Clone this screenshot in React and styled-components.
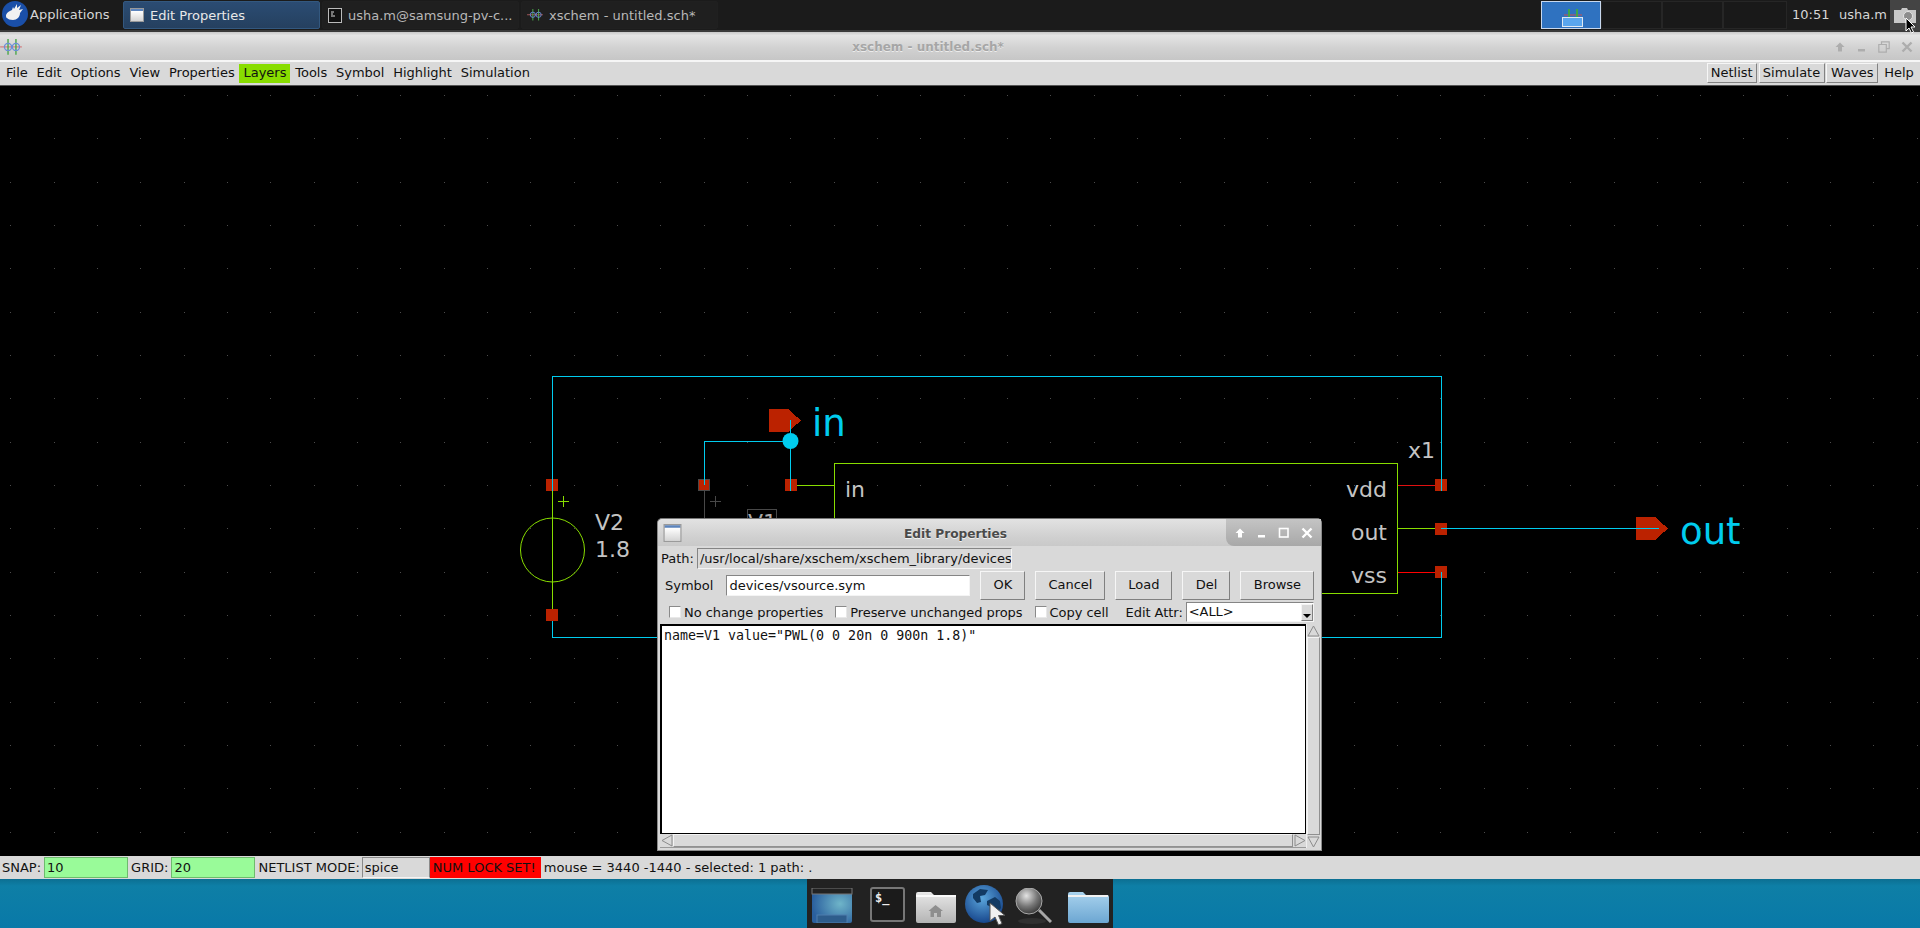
import React from "react";
import styled, { createGlobalStyle } from "styled-components";

const GlobalStyle = createGlobalStyle`
  * { box-sizing: border-box; }
  html, body { margin: 0; padding: 0; background: #000; overflow: hidden; }
  body { font-family: "DejaVu Sans", sans-serif; font-size: 13px; }
`;

const menuItems = ["File", "Edit", "Options", "View", "Properties", "Layers", "Tools", "Symbol", "Highlight", "Simulation"];
const WIRE = "#00ccee";
const SYM = "#88dd00";
const PIN = "#bb2200";
const GREY = "#484848";
const TXT = "#c4c4c4";

const Screen = styled.div`
  width: 1920px;
  height: 928px;
  display: flex;
  flex-direction: column;
  overflow: hidden;
`;

/* ---- top panel ---- */
const Panel = styled.div`
  height: 32px;
  flex: none;
  display: flex;
  align-items: stretch;
  background: #1b1b1b;
  border-bottom: 2px solid #3a3a3a;
  color: #d6d6d6;
`;
const AppMenu = styled.div`
  width: 123px;
  display: flex;
  align-items: center;
  gap: 1px;
  padding: 0 0 2px 1px;
`;
const Task = styled.div`
  width: 197px;
  margin: 1px 2px 0 0;
  height: 28px;
  display: flex;
  align-items: center;
  gap: 6px;
  padding-left: ${(p) => (p.$active ? "6px" : "5px")};
  border: 1px solid ${(p) => (p.$active ? "#33587f" : "#202020")};
  border-radius: 2px;
  background: ${(p) => (p.$active ? "linear-gradient(#2b4c73, #25405f)" : "#1f1f1f")};
  color: ${(p) => (p.$active ? "#e8e8e8" : "#b8b8b8")};
`;
const Spacer = styled.div`
  flex: 1;
`;
const Pager = styled.div`
  display: flex;
  height: 28px;
  margin-top: 1px;
`;
const Desk = styled.div`
  width: ${(p) => p.$w}px;
  background: ${(p) => (p.$active ? "#2f72c0" : "#191919")};
  border: 1px solid ${(p) => (p.$active ? "#c8d8ee" : "#262626")};
  position: relative;
`;
const MiniWindow = styled.div`
  position: absolute;
  left: 20px;
  top: 15px;
  width: 21px;
  height: 10px;
  background: #5aa6ee;
  border: 1px solid #dfe8f2;
`;
const Clock = styled.div`
  display: flex;
  align-items: center;
  padding: 0 0 2px ${(p) => p.$left}px;
  width: ${(p) => p.$w}px;
`;
const Tray = styled.div`
  width: 30px;
  margin-left: 3px;
  background: #444;
  display: flex;
  align-items: center;
  justify-content: center;
  position: relative;
`;

/* ---- window title ---- */
const TitleBar = styled.div`
  height: 28px;
  flex: none;
  display: flex;
  align-items: center;
  padding-top: 2px;
  background: linear-gradient(#c8c8c8 0, #e4e4e4 12%, #d2d2d2 55%, #c6c6c6 100%);
`;
const MainTitle = styled.div`
  flex: 1;
  text-align: center;
  font-weight: bold;
  font-size: 12px;
  color: #a6a6a6;
  text-shadow: 0 1px 0 #ececec;
`;
const Controls = styled.div`
  width: ${(p) => p.$w}px;
  height: 100%;
  display: flex;
  align-items: center;
  justify-content: space-between;
  padding: 0 ${(p) => p.$pr}px 0 ${(p) => p.$pl}px;
`;

/* ---- menu bar ---- */
const MenuBar = styled.div`
  height: 26px;
  flex: none;
  display: flex;
  align-items: center;
  gap: 0.75px;
  padding: 0 2px 1px 2px;
  background: #d9d9d9;
  border-top: 2px solid #f6f6f6;
  border-bottom: 1px solid #555;
  color: #111;
`;
const MenuItem = styled.div`
  height: 19px;
  line-height: 18px;
  padding: 0 4px;
  background: ${(p) => (p.$on ? "#88dd00" : "transparent")};
`;
const BarButton = styled.div`
  width: ${(p) => p.$w}px;
  height: 20px;
  line-height: 18px;
  text-align: center;
  margin-left: 1px;
  border: 1px solid;
  border-color: ${(p) => (p.$flat ? "transparent" : "#f6f6f6 #828282 #828282 #f6f6f6")};
`;

/* ---- canvas ---- */
const Canvas = styled.div`
  flex: none;
  height: 770px;
  position: relative;
  background: #000;
  overflow: hidden;
`;
const SchematicSvg = styled.svg`
  display: block;
  width: 1920px;
  height: 770px;
  font-family: "DejaVu Sans", sans-serif;
  shape-rendering: crispEdges;
  text { shape-rendering: auto; }
`;

/* ---- edit properties dialog ---- */
const Dialog = styled.div`
  position: absolute;
  left: 657px;
  top: 432px;
  width: 665px;
  height: 333px;
  display: flex;
  flex-direction: column;
  background: #d9d9d9;
  border: 1px solid #8a8a8a;
  border-top-color: #777;
  border-radius: 5px 5px 0 0;
  color: #111;
`;
const DialogTitle = styled.div`
  height: 27px;
  flex: none;
  display: flex;
  align-items: center;
  padding-left: 5px;
  background: linear-gradient(#e2e2e2, #cfcfcf 70%, #c9c9c9);
  border-radius: 5px 5px 0 0;
`;
const DialogName = styled.div`
  flex: 1;
  text-align: center;
  font-weight: bold;
  font-size: 12.2px;
  color: #4a4a4a;
  text-shadow: 0 1px 0 #f2f2f2;
  padding: 2px 0 0 3px;
`;
const DialogControls = styled(Controls)`
  border-bottom-left-radius: 8px;
  background: linear-gradient(#c4c4c4, #a8a8a8);
`;
const Row = styled.div`
  display: flex;
  align-items: center;
  flex: none;
  height: ${(p) => p.$h}px;
  margin-top: ${(p) => p.$mt}px;
  padding-left: ${(p) => p.$pl}px;
`;
const OptionRow = styled(Row)`
  letter-spacing: -0.05px;
`;
const Entry = styled.div`
  height: 21px;
  line-height: 19px;
  width: ${(p) => p.$w}px;
  margin-left: ${(p) => p.$ml}px;
  padding-left: 2px;
  overflow: hidden;
  white-space: nowrap;
  background: ${(p) => (p.$white ? "#fff" : "#d9d9d9")};
  border: 1px solid;
  border-color: #858585 #f4f4f4 #f4f4f4 #858585;
`;
const DlgButton = styled.div`
  width: ${(p) => p.$w}px;
  height: 29px;
  line-height: 26px;
  margin-left: ${(p) => p.$ml}px;
  text-align: center;
  border: 1px solid;
  border-color: #f6f6f6 #808080 #808080 #f6f6f6;
`;
const Check = styled.span`
  width: 12px;
  height: 12px;
  flex: none;
  background: #fff;
  border: 1px solid;
  border-color: #8a8a8a #e8e8e8 #e8e8e8 #8a8a8a;
  margin: 0 3px 0 ${(p) => p.$ml}px;
`;
const AttrLabel = styled.span`
  margin-left: 17px;
`;
const Combo = styled.div`
  width: 128px;
  height: 20px;
  margin-left: 3px;
  display: flex;
  justify-content: space-between;
  background: #fff;
  padding-left: 2px;
  line-height: 18px;
  border: 1px solid;
  border-color: #858585 #f4f4f4 #f4f4f4 #858585;
`;
const ComboArrow = styled.div`
  width: 12px;
  background: #d9d9d9;
  border: 1px solid;
  border-color: #f4f4f4 #808080 #808080 #f4f4f4;
  display: flex;
  align-items: flex-end;
  justify-content: center;
  padding-bottom: 2px;
  margin-top: 1px;
`;
const EditArea = styled.div`
  flex: 1;
  display: grid;
  grid-template-columns: 646px 14px;
  grid-template-rows: 1fr 14px;
  margin: 2px 0 2px 2px;
  min-height: 0;
`;
const TextBox = styled.div`
  background: #fff;
  border: 1px solid #000;
  border-width: 2px 1px 1px 2px;
  padding: 2px 0 0 2px;
  font-family: "DejaVu Sans Mono", monospace;
  font-size: 13.3px;
  line-height: 16px;
  white-space: pre;
`;
const ScrollY = styled.div`
  grid-row: 1 / 3;
  grid-column: 2;
  display: flex;
  flex-direction: column;
  justify-content: space-between;
  border-left: 1px solid #eee;
  background: #d9d9d9;
`;
const ScrollX = styled.div`
  display: flex;
  justify-content: space-between;
  background: #d9d9d9;
  border-bottom: 1px solid #999;
`;
const Thumb = styled.div`
  flex: 1;
  border: 1px solid;
  border-color: #f4f4f4 #909090 #909090 #f4f4f4;
`;

/* ---- status bar ---- */
const StatusBar = styled.div`
  height: 23px;
  flex: none;
  display: flex;
  align-items: center;
  padding: 0 0 1px 2px;
  background: #d9d9d9;
  color: #111;
  white-space: nowrap;
`;
const StatusField = styled.div`
  width: ${(p) => p.$w}px;
  height: 21px;
  line-height: 20px;
  margin: 0 ${(p) => p.$mr}px 0 ${(p) => p.$ml}px;
  padding-left: 2px;
  background: ${(p) => p.$bg};
  border: 1px solid ${(p) => p.$line};
  border-bottom-color: ${(p) => p.$low || p.$line};
  color: ${(p) => p.$fg || "#111"};
`;

/* ---- desktop and dock ---- */
const Desktop = styled.div`
  flex: 1;
  min-height: 0;
  display: flex;
  justify-content: center;
  background: linear-gradient(#0c6f92 0, #0e7fa6 14%, #0979a8 100%);
`;
const Dock = styled.div`
  width: 306px;
  display: flex;
  align-items: flex-start;
  padding-left: 4px;
  background: #222;
  position: relative;
`;
const DockIcon = styled.svg`
  flex: none;
  margin-left: ${(p) => p.$ml}px;
  margin-top: ${(p) => p.$mt}px;
  font-family: "DejaVu Sans Mono", monospace;
`;
const Pointer = styled.svg`
  position: absolute;
  left: ${(p) => p.$x}px;
  top: ${(p) => p.$y}px;
`;

function XschemIcon({ size = 22 }) {
  return (
    <svg width={size} height={size * 0.72} viewBox="0 0 22 16">
      <path d="M0 8h22" stroke="#d86a6a" strokeWidth="1" />
      <path d="M8 0v16M16 0v16" stroke="#4aa64a" strokeWidth="1.4" />
      <circle cx="8" cy="8" r="3.6" fill="none" stroke="#6a8fd8" strokeWidth="1.3" />
      <circle cx="16" cy="8" r="3.6" fill="none" stroke="#6a8fd8" strokeWidth="1.3" />
    </svg>
  );
}

function WindowIcon({ w = 14, h = 14 }) {
  return (
    <svg width={w} height={h} viewBox="0 0 14 14">
      <rect x="0.5" y="0.5" width="13" height="13" fill="#e6e6e6" stroke="#9a9a9a" />
      <rect x="1" y="1" width="12" height="2" fill="#5b84bd" />
      <rect x="1" y="3" width="12" height="10" fill="url(#winFill)" />
      <defs>
        <linearGradient id="winFill" x1="0" y1="0" x2="0" y2="1">
          <stop offset="0" stopColor="#ffffff" />
          <stop offset="1" stopColor="#d4d4d4" />
        </linearGradient>
      </defs>
    </svg>
  );
}

function UpIcon({ color }) {
  return (
    <svg width="12" height="12" viewBox="0 0 12 12">
      <path d="M6 1.5 10.5 6H8v4.5H4V6H1.5z" fill={color} />
    </svg>
  );
}
function MinIcon({ color }) {
  return (
    <svg width="10" height="12" viewBox="0 0 10 12">
      <rect x="1" y="8" width="7" height="2.5" fill={color} />
    </svg>
  );
}
function MaxIcon({ color }) {
  return (
    <svg width="12" height="12" viewBox="0 0 12 12">
      <rect x="1.5" y="1.5" width="8.5" height="8.5" fill="none" stroke={color} strokeWidth="1.6" />
    </svg>
  );
}
function RestoreIcon({ color }) {
  return (
    <svg width="12" height="12" viewBox="0 0 12 12">
      <path d="M3.5 3V.8h7.7v6.8H8.5M.8 3.5h7.5v7.7H.8z" fill="none" stroke={color} strokeWidth="1.2" />
    </svg>
  );
}
function CloseIcon({ color }) {
  return (
    <svg width="12" height="12" viewBox="0 0 12 12">
      <path d="M1.5 1.5l9 9M10.5 1.5l-9 9" stroke={color} strokeWidth="2.4" />
    </svg>
  );
}

const arrowPoints = {
  up: "6.5,2 12,12 1,12",
  down: "1,2 12,2 6.5,12",
  left: "2,6.5 12,1 12,12",
  right: "12,6.5 2,1 2,12",
};
const ArrowSvg = styled.svg`
  flex: none;
`;
function Arrow({ dir }) {
  return (
    <ArrowSvg width="13" height="13" viewBox="0 0 13 13">
      <polygon points={arrowPoints[dir]} fill="#d9d9d9" stroke="#8c8c8c" />
    </ArrowSvg>
  );
}

function XfceLogo() {
  return (
    <svg width="28" height="28" viewBox="0 0 28 28">
      <circle cx="14" cy="14" r="13" fill="#1a4fa8" />
      <path
        d="M5 15c1-3 4-4 6-5l1-3 1 2 3-5 0 4 4-3-2 5 4-1-3 4c0 4-3 7-7 7-3 0-5-1-6-2-1 0-1-2-1-3z"
        fill="#f2f2f2"
      />
    </svg>
  );
}

function Schematic() {
  const dots = [];
  for (let i = 0; i < 45; i++) {
    for (let j = 2; j < 20; j++) {
      dots.push(<rect key={i + "-" + j} x={Math.round(10.3 + i * 43.33)} y={Math.round(8.3 + j * 43.33)} width="1" height="1" fill="#4c4c4c" />);
    }
  }
  const pin = (x, y, w = 12, h = 12) => <rect x={x} y={y} width={w} height={h} fill={PIN} />;
  return (
    <SchematicSvg viewBox="0 86 1920 770">
      {dots}

      {/* V1, selected and mostly behind the dialog */}
      <rect x="698.5" y="479.5" width="11" height="11" fill="none" stroke={GREY} />
      <path d="M704.5 491V640M710 501.5h11M715.5 496v11" stroke={GREY} fill="none" />
      <circle cx="704.5" cy="550" r="32" fill="none" stroke={GREY} />
      <rect x="747.5" y="509.5" width="29" height="30" fill="none" stroke={GREY} />
      <text x="748" y="530" fontSize="22" fill="#aaaaaa">V1</text>

      {/* V2 */}
      <path d="M552.5 491V609M558 501.5h11M563.5 496v11" stroke={SYM} fill="none" />
      <circle cx="552.5" cy="550" r="32" fill="none" stroke={SYM} shapeRendering="auto" />
      <text x="595" y="530" fontSize="22" fill={TXT}>V2</text>
      <text x="595" y="557" fontSize="22" fill={TXT}>1.8</text>

      {/* subcircuit */}
      <path d="M834.5 600V463.5H1397.5V593.5H1300" stroke={SYM} fill="none" />
      <path d="M797 485.5H834.5M1397.5 528.5H1436" stroke={SYM} fill="none" />
      <path d="M1397.5 485.5H1436" stroke="#e01010" fill="none" />
      <path d="M1397.5 572.5H1436" stroke="#ff0000" fill="none" />
      <text x="845" y="497" fontSize="22" fill={TXT}>in</text>
      <text x="1387" y="497" fontSize="22" fill={TXT} textAnchor="end">vdd</text>
      <text x="1387" y="540" fontSize="22" fill={TXT} textAnchor="end">out</text>
      <text x="1387" y="583" fontSize="22" fill={TXT} textAnchor="end">vss</text>
      <text x="1408" y="458" fontSize="22" fill={TXT}>x1</text>

      {/* labels */}
      <polygon points="769,409 788,409 801,420.5 788,432 769,432" fill={PIN} />
      <text x="812" y="436" fontSize="37" fill={WIRE}>in</text>
      <polygon points="1636,517 1655,517 1668,528.5 1655,540 1636,540" fill={PIN} />
      <text x="1680" y="544" fontSize="37" fill={WIRE}>out</text>

      {/* pins */}
      {pin(546, 479)}
      {pin(546, 609)}
      {pin(699, 480, 10, 10)}
      {pin(785, 479)}
      {pin(1435, 479)}
      {pin(1435, 523)}
      {pin(1435, 566)}

      {/* wires */}
      <path d="M552.5 491V376.5H1441.5V491" stroke={WIRE} fill="none" />
      <path d="M552.5 621V637.5H1441.5V572" stroke={WIRE} fill="none" />
      <path d="M790.5 420V491M790.5 441.5H704.5V485" stroke={WIRE} fill="none" />
      <path d="M1441 528.5H1659" stroke={WIRE} fill="none" />
      <circle cx="790.5" cy="441" r="8" fill={WIRE} shapeRendering="auto" />
    </SchematicSvg>
  );
}

export default function App() {
  return (
    <Screen>
      <GlobalStyle />
      <Panel>
        <AppMenu>
          <XfceLogo />
          Applications
        </AppMenu>
        <Task $active>
          <WindowIcon />
          Edit Properties
        </Task>
        <Task>
          <svg width="14" height="15" viewBox="0 0 14 15">
            <rect x="0.5" y="0.5" width="13" height="14" fill="#111" stroke="#bbb" />
            <path d="M3 4h3M3 6h2M3 8h4" stroke="#ddd" />
          </svg>
          usha.m@samsung-pv-c...
        </Task>
        <Task>
          <XschemIcon size={16} />
          xschem - untitled.sch*
        </Task>
        <Spacer />
        <Pager>
          <Desk $active $w={60}>
            <svg width="58" height="16" viewBox="0 0 58 16">
              <path d="M22 13h18" stroke="#c85050" />
              <path d="M27 7v9M35 7v9" stroke="#3fa64a" strokeWidth="2" />
            </svg>
            <MiniWindow />
          </Desk>
          <Desk $w={61} />
          <Desk $w={61} />
          <Desk $w={64} />
        </Pager>
        <Clock $left={5} $w={47}>10:51</Clock>
        <Clock $left={5} $w={53}>usha.m</Clock>
        <Tray>
          <svg width="24" height="16" viewBox="0 0 24 16">
            <path d="M1 3h7l1-2h5l1 2h8v13H1z" fill="#c8c8c8" />
            <circle cx="15" cy="9" r="4.5" fill="#8c8c8c" stroke="#e4e4e4" />
          </svg>
          <Pointer $x={15} $y={17} width="12" height="17" viewBox="0 0 12 17">
            <path d="M1 1v13l3-3 2.5 5 2-1-2.5-5H10z" fill="#000" stroke="#fff" />
          </Pointer>
        </Tray>
      </Panel>

      <TitleBar>
        <XschemIcon />
        <MainTitle>xschem - untitled.sch*</MainTitle>
        <Controls $w={86} $pl={0} $pr={7}>
          <UpIcon color="#adadad" />
          <MinIcon color="#adadad" />
          <RestoreIcon color="#adadad" />
          <CloseIcon color="#adadad" />
        </Controls>
      </TitleBar>

      <MenuBar>
        {menuItems.map((item) => (
          <MenuItem key={item} $on={item === "Layers"}>{item}</MenuItem>
        ))}
        <Spacer />
        <BarButton $w={50}>Netlist</BarButton>
        <BarButton $w={66}>Simulate</BarButton>
        <BarButton $w={52}>Waves</BarButton>
        <BarButton $w={38} $flat>Help</BarButton>
      </MenuBar>

      <Canvas>
        <Schematic />
        <Dialog>
          <DialogTitle>
            <WindowIcon w={19} h={18} />
            <DialogName>Edit Properties</DialogName>
            <DialogControls $w={95} $pl={8} $pr={8}>
              <UpIcon color="#fff" />
              <MinIcon color="#fff" />
              <MaxIcon color="#fff" />
              <CloseIcon color="#fff" />
            </DialogControls>
          </DialogTitle>
          <Row $h={21} $mt={2} $pl={3}>
            Path:
            <Entry $w={315} $ml={3}>/usr/local/share/xschem/xschem_library/devices</Entry>
          </Row>
          <Row $h={29} $mt={2} $pl={7}>
            Symbol
            <Entry $white $w={244} $ml={13}>devices/vsource.sym</Entry>
            <DlgButton $w={45} $ml={10}>OK</DlgButton>
            <DlgButton $w={70} $ml={10}>Cancel</DlgButton>
            <DlgButton $w={57} $ml={10}>Load</DlgButton>
            <DlgButton $w={48} $ml={10}>Del</DlgButton>
            <DlgButton $w={74} $ml={10}>Browse</DlgButton>
          </Row>
          <OptionRow $h={20} $mt={2} $pl={0}>
            <Check $ml={11} />
            No change properties
            <Check $ml={12} />
            Preserve unchanged props
            <Check $ml={12} />
            Copy cell
            <AttrLabel>Edit Attr:</AttrLabel>
            <Combo>
              &lt;ALL&gt;
              <ComboArrow>
                <svg width="8" height="4" viewBox="0 0 8 4">
                  <path d="M0 0h8L4 4z" fill="#000" />
                </svg>
              </ComboArrow>
            </Combo>
          </OptionRow>
          <EditArea>
            <TextBox>name=V1 value="PWL(0 0 20n 0 900n 1.8)"</TextBox>
            <ScrollY>
              <Arrow dir="up" />
              <Thumb />
              <Arrow dir="down" />
            </ScrollY>
            <ScrollX>
              <Arrow dir="left" />
              <Thumb />
              <Arrow dir="right" />
            </ScrollX>
          </EditArea>
        </Dialog>
      </Canvas>

      <StatusBar>
        SNAP:
        <StatusField $w={84} $ml={3} $mr={3} $bg="#99fb99" $line="#6dbb6d">10</StatusField>
        GRID:
        <StatusField $w={84} $ml={3} $mr={3} $bg="#99fb99" $line="#6dbb6d">20</StatusField>
        NETLIST MODE:
        <StatusField $w={68} $ml={2} $mr={0} $bg="#d9d9d9" $line="#8a8a8a" $low="#f4f4f4">spice</StatusField>
        <StatusField $w={111} $ml={0} $mr={3} $bg="#ff0000" $line="#ff0000">NUM LOCK SET!</StatusField>
        mouse = 3440 -1440 - selected: 1 path: .
      </StatusBar>

      <Desktop>
        <Dock>
          <DockIcon $ml={0} $mt={9} width="42" height="35" viewBox="0 0 42 35">
            <defs>
              <radialGradient id="dockWin" cx="0.7" cy="0.45" r="0.7">
                <stop offset="0" stopColor="#6fb5c9" />
                <stop offset="1" stopColor="#2a5f9e" />
              </radialGradient>
            </defs>
            <rect x="1" y="0" width="40" height="35" rx="2" fill="url(#dockWin)" />
            <rect x="1" y="0" width="40" height="6" fill="#222" stroke="#777" />
            <rect x="6" y="27" width="30" height="8" fill="#2e5d8c" stroke="#4f7fae" />
          </DockIcon>
          <DockIcon $ml={17} $mt={8} width="35" height="35" viewBox="0 0 35 35">
            <rect x="1" y="1" width="33" height="33" rx="2" fill="#1b1b1b" stroke="#777" strokeWidth="2" />
            <text x="5" y="15" fontSize="12" fontWeight="bold" fill="#eee">$_</text>
          </DockIcon>
          <DockIcon $ml={10} $mt={11} width="41" height="33" viewBox="0 0 41 33">
            <defs>
              <linearGradient id="dockHome" x1="0" y1="0" x2="0" y2="1">
                <stop offset="0" stopColor="#e8e8e8" />
                <stop offset="1" stopColor="#b4b4b4" />
              </linearGradient>
            </defs>
            <path d="M1 4q0-2 2-2h13l3 3h20q2 0 2 2v24q0 2-2 2H3q-2 0-2-2z" fill="url(#dockHome)" />
            <path d="M1 5h40v2H1z" fill="#fafafa" />
            <path d="M20.5 15l-7 6h2v6h3.5v-4h3v4H26v-6h2z" fill="#8e8e8e" />
          </DockIcon>
          <DockIcon $ml={9} $mt={5} width="38" height="41" viewBox="0 0 38 41">
            <defs>
              <radialGradient id="globe" cx="0.45" cy="0.35" r="0.7">
                <stop offset="0" stopColor="#5ba6dc" />
                <stop offset="1" stopColor="#123f86" />
              </radialGradient>
            </defs>
            <circle cx="19" cy="20" r="19" fill="url(#globe)" />
            <path d="M8 10l7-5 8 1-3 5-5 1 1 6-4 1-4-5zM22 17l8-4 5 4 1 7-6 8-3-2-1-7-4-2z" fill="#123a63" />
          </DockIcon>
          <DockIcon $ml={11} $mt={9} width="38" height="36" viewBox="0 0 38 36">
            <defs>
              <radialGradient id="lens" cx="0.4" cy="0.3" r="0.75">
                <stop offset="0" stopColor="#e4e4e4" />
                <stop offset="0.55" stopColor="#777" />
                <stop offset="1" stopColor="#333" />
              </radialGradient>
            </defs>
            <circle cx="15" cy="13" r="13" fill="url(#lens)" stroke="#aaa" />
            <path d="M25 22l12 12" stroke="#a8a8a8" strokeWidth="3" />
            <ellipse cx="18" cy="33" rx="14" ry="3" fill="#303030" />
          </DockIcon>
          <DockIcon $ml={15} $mt={11} width="42" height="33" viewBox="0 0 42 33">
            <defs>
              <linearGradient id="dockFolder" x1="0" y1="0" x2="0" y2="1">
                <stop offset="0" stopColor="#a9d3ee" />
                <stop offset="1" stopColor="#6ca6d2" />
              </linearGradient>
            </defs>
            <path d="M1 4q0-2 2-2h13l3 3h21q2 0 2 2v24q0 2-2 2H3q-2 0-2-2z" fill="url(#dockFolder)" />
            <path d="M1 5h40v2H1z" fill="#f2f2f2" />
          </DockIcon>
          <Pointer $x={182} $y={23} width="17" height="24" viewBox="0 0 17 24">
            <path d="M1 1v18l5-4 3.5 8 3.5-1.5-3.5-8H16z" fill="#f0f0f0" stroke="#555" />
          </Pointer>
        </Dock>
      </Desktop>
    </Screen>
  );
}
